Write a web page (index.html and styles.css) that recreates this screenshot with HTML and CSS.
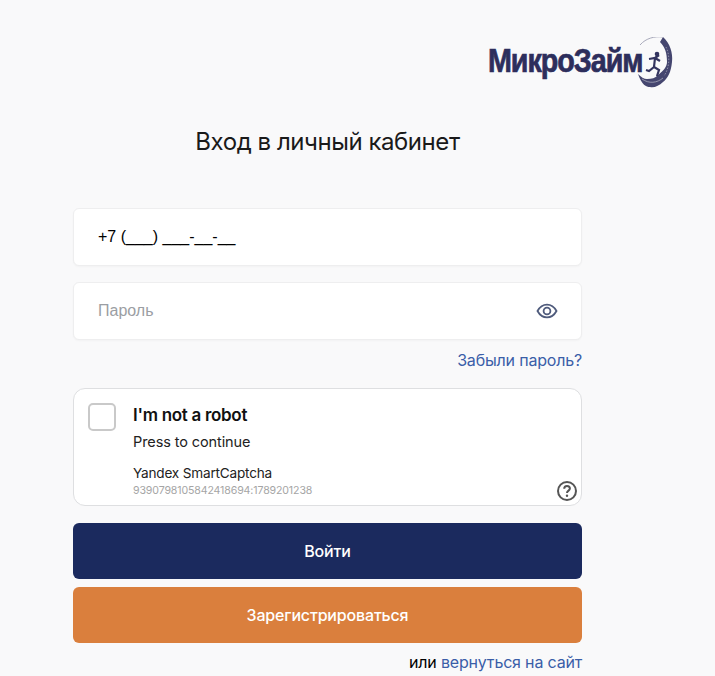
FILE: index.html
```html
<!DOCTYPE html>
<html lang="ru">
<head>
    <meta charset="UTF-8">
    <meta name="viewport" content="width=device-width, initial-scale=1.0">
    <title>Вход в личный кабинет</title>
    <link rel="stylesheet" href="styles.css">
</head>
<body>

    <div class="page">
        <div class="logo-row">
            <div class="logo">
                <span class="logo-text">МикроЗайм</span>
                <!-- wheel with a runner, sits over the end of the word -->
                <svg class="logo-wheel" width="36" height="52" viewBox="0 0 36 52">
                    <path d="M26 0 C33 6 36 16 35 25 C34 35 31 41 26 45 C22 49 17 51 13 50 C9 50 5 48 1 37 C4 40 7 42 10 42 C15 42 18 41 21 38 C26 34 30 30 30 25 C30 16 28 10 23 5 Z" fill="#45466f"/>
                    <path d="M3 8 C9 1 18 -1 26 0" fill="none" stroke="#a9aabb" stroke-width="1"/>
                    <path d="M29 10 C33 18 33 30 27 39" fill="none" stroke="#8f90a8" stroke-width="1" stroke-dasharray="1.5 1.5"/>
                    <path d="M5 42 C12 47 20 46 26 41" fill="none" stroke="#a9aabb" stroke-width="0.8"/>
                    <path d="M12 22 L18 21 L23 24 M18 21 L17 30 L22 33 L20 39 M17 30 L12 34 L9 33 M18 21 L22 18" fill="none" stroke="#33345f" stroke-width="2.2"/>
                    <circle cx="20" cy="17" r="2.3" fill="#33345f"/>
                </svg>
            </div>
        </div>

        <h1 class="title">Вход в личный кабинет</h1>

        <form class="login-form">
            <div class="field">
                <span class="field-value">+7 (___) ___-__-__</span>
            </div>
            <div class="field">
                <span class="field-placeholder">Пароль</span>
                <svg class="eye-icon" width="22" height="16" viewBox="0 0 22 16">
                    <path d="M1.5 8 C4 3.5 7.2 1.6 11 1.6 C14.8 1.6 18 3.5 20.5 8 C18 12.5 14.8 14.4 11 14.4 C7.2 14.4 4 12.5 1.5 8 Z" fill="none" stroke="#4f5b7c" stroke-width="1.8"/>
                    <circle cx="11" cy="8" r="3.4" fill="none" stroke="#4f5b7c" stroke-width="1.8"/>
                </svg>
            </div>
            <div class="forgot-row">
                <a class="link" href="#">Забыли пароль?</a>
            </div>

            <div class="captcha">
                <div class="captcha-box"></div>
                <div class="captcha-text">
                    <div class="captcha-title">I'm not a robot</div>
                    <div class="captcha-sub">Press to continue</div>
                    <div class="captcha-brand">Yandex SmartCaptcha</div>
                    <div class="captcha-id">9390798105842418694:1789201238</div>
                </div>
                <svg class="captcha-help" width="22" height="22" viewBox="0 0 22 22">
                    <circle cx="11" cy="11" r="9" fill="none" stroke="#555" stroke-width="2"/>
                    <path d="M8.2 8.8 C8.2 7 9.4 6 11 6 C12.7 6 13.9 7 13.9 8.6 C13.9 10.6 11 10.7 11 13" fill="none" stroke="#555" stroke-width="2"/>
                    <circle cx="11" cy="15.8" r="1.2" fill="#555"/>
                </svg>
            </div>

            <button class="btn btn-login" type="button">Войти</button>
            <button class="btn btn-register" type="button">Зарегистрироваться</button>

            <div class="back-row">или <a class="link" href="#">вернуться на сайт</a></div>
        </form>
    </div>

</body>
</html>
```

FILE: styles.css
```css
body {
    font-family: Inter, "Liberation Sans", sans-serif;
    background-color: #f9f9fa;
    color: #000;
    margin: 0;
    padding: 0;
    height: 676px;
    overflow: hidden;
}

.page {
    width: 509px;
    margin-left: 73px;
    padding-top: 36px;
}

.logo-row {
    display: flex;
    justify-content: flex-end;
    margin-right: -91px;
}

.logo {
    position: relative;
    width: 185px;
    height: 52px;
    display: flex;
    align-items: center;
}

.logo-text {
    font-family: "Liberation Sans", sans-serif;
    font-size: 33px;
    font-weight: bold;
    color: #2d2e5c;
    letter-spacing: -1.2px;
    white-space: nowrap;
    -webkit-text-stroke: 0.7px #2d2e5c;
    transform: scaleX(0.87);
    transform-origin: left center;
    margin-top: -3px;
}

.logo-wheel {
    position: absolute;
    right: 0;
    top: 1px;
}

.title {
    font-size: 24px;
    font-weight: 400;
    letter-spacing: -0.45px;
    line-height: 30px;
    text-align: center;
    color: #1a1a1a;
    margin: 39px 0 51px;
}

.login-form {
    display: flex;
    flex-direction: column;
}

.field {
    display: flex;
    align-items: center;
    justify-content: space-between;
    height: 58px;
    box-sizing: border-box;
    padding: 0 23px 0 24px;
    background-color: #fff;
    border: 1px solid #eeeeef;
    border-radius: 6px;
    box-shadow: 0 1px 2px rgba(0, 0, 0, 0.03);
    font-family: "Liberation Sans", sans-serif;
    font-size: 16px;
    margin-bottom: 16px;
}

.field-placeholder {
    color: #9b9ea3;
}

.forgot-row {
    text-align: right;
    margin-top: -6px;
    margin-bottom: 18px;
    line-height: 20px;
}

.link {
    color: #3a5ea8;
    text-decoration: none;
    font-size: 16px;
    letter-spacing: -0.18px;
}

.captcha {
    position: relative;
    display: flex;
    height: 118px;
    box-sizing: border-box;
    background-color: #fff;
    border: 1px solid #dedfe1;
    border-radius: 12px;
    padding: 14px 14px 0 14px;
    margin-bottom: 17px;
}

.captcha-box {
    width: 28px;
    height: 28px;
    box-sizing: border-box;
    border: 2px solid #c9c9c9;
    border-radius: 5px;
    background-color: #fff;
    margin-right: 17px;
}

.captcha-title {
    font-size: 17px;
    font-weight: 600;
    letter-spacing: -0.3px;
    line-height: 24px;
    color: #111;
}

.captcha-sub {
    font-size: 14.5px;
    letter-spacing: -0.1px;
    line-height: 20px;
    margin-top: 5px;
    color: #222;
}

.captcha-brand {
    font-size: 13.6px;
    letter-spacing: -0.2px;
    line-height: 18px;
    margin-top: 12px;
    color: #222;
}

.captcha-id {
    font-size: 10.6px;
    letter-spacing: -0.13px;
    line-height: 14px;
    margin-top: 2px;
    color: #a5a5a5;
}

.captcha-help {
    position: absolute;
    right: 3px;
    bottom: 3px;
}

.btn {
    height: 56px;
    border: none;
    border-radius: 6px;
    color: #fff;
    font-family: inherit;
    font-size: 16px;
    font-weight: 500;
    letter-spacing: -0.17px;
    margin-bottom: 8px;
    cursor: pointer;
}

.btn-login {
    background-color: #1b2a5e;
}

.btn-register {
    background-color: #da7f3d;
}

.back-row {
    text-align: right;
    font-size: 16px;
    letter-spacing: -0.18px;
    line-height: 20px;
    margin-top: 1px;
}
```
